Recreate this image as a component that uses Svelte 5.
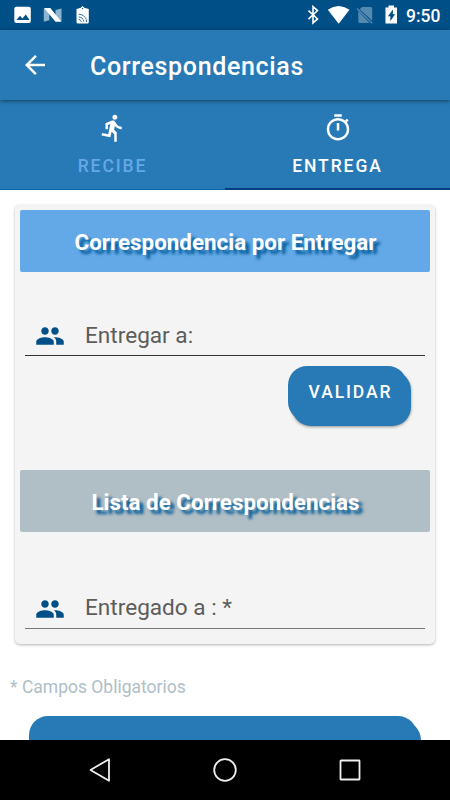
<script>
	const title = 'Correspondencias';

	const icons = {
		back: 'M20 11H7.83l5.59-5.59L12 4l-8 8 8 8 1.41-1.41L7.83 13H20v-2z',
		run: 'M13.49 5.48c1.1 0 2-.9 2-2s-.9-2-2-2-2 .9-2 2 .9 2 2 2zm-3.6 13.9l1-4.4 2.1 2v6h2v-7.5l-2.1-2 .6-3c1.3 1.5 3.3 2.5 5.5 2.5v-2c-1.9 0-3.5-1-4.3-2.4l-1-1.6c-.4-.6-1-1-1.7-1-.3 0-.5.1-.8.1l-5.2 2.2v4.7h2v-3.4l1.8-.7-1.6 8.1-4.9-1-.4 2 7 1.4z',
		timer: 'M15 1H9v2h6V1zm-4 13h2V8h-2v6zm8.03-6.61l1.42-1.42c-.43-.51-.9-.99-1.41-1.41l-1.42 1.42C16.07 4.74 14.12 4 12 4c-4.97 0-9 4.03-9 9s4.02 9 9 9 9-4.03 9-9c0-2.12-.74-4.07-1.97-5.61zM12 20c-3.87 0-7-3.13-7-7s3.13-7 7-7 7 3.13 7 7-3.13 7-7 7z',
		people: 'M16 11c1.66 0 2.99-1.34 2.99-3S17.66 5 16 5c-1.66 0-3 1.34-3 3s1.34 3 3 3zm-8 0c1.66 0 2.99-1.34 2.99-3S9.66 5 8 5C6.34 5 5 6.34 5 8s1.34 3 3 3zm0 2c-2.33 0-7 1.17-7 3.5V19h14v-2.5c0-2.33-4.67-3.5-7-3.5zm8 0c-.29 0-.62.02-.97.05 1.16.84 1.97 1.97 1.97 3.45V19h6v-2.5c0-2.33-4.67-3.5-7-3.5z'
	};

	const tabs = [
		{ id: 'recibe', label: 'RECIBE', icon: icons.run },
		{ id: 'entrega', label: 'ENTREGA', icon: icons.timer }
	];

	let active = $state('entrega');
</script>

{#snippet icon(path)}
	<svg class="icon" viewBox="0 0 24 24"><path d={path} /></svg>
{/snippet}

<div class="screen">
	<div class="status">
		<svg class="notifications" viewBox="0 0 80 20">
			<rect x="0.3" y="1.8" width="16.5" height="16.2" rx="2" fill="#fff" />
			<path d="M2.5 15l3.5-4.2 2.4 2.8 3.4-4.2 3.8 5.6z" fill="#004f87" />
			<path d="M29.8 3.6l5.5 3v8.6l-5.5 1.6zM41.5 5l6-1.6v13.2l-6-3.4z" fill="#8db4d0" />
			<path d="M30 3h6.3l11.2 13.7h-6z" fill="#fff" />
			<path d="M62.5 4l4.3-1.2L68.5 1l1.8 1.8L74.8 4v13q0 1.5-1.5 1.5H64q-1.5 0-1.5-1.5z" fill="#fff" />
			<circle cx="68.5" cy="3.6" r="0.7" fill="#004f87" />
			<path d="M64.8 9.3a7.5 7.5 0 0 1 7.7 7.5M64.8 12a5 5 0 0 1 5 5M64.8 14.5a2.4 2.4 0 0 1 2.4 2.4" fill="none" stroke="#004f87" stroke-width="1" stroke-dasharray="2 .5" />
		</svg>
		<svg class="system" viewBox="0 0 92 20">
			<path d="M2.5 5.7l9 8.2-4.5 4V1.6l4.5 4-9 8.6" fill="none" stroke="#fff" stroke-width="1.6" />
			<path d="M21.8 4.7Q32.5-2.7 43.5 4.7L32.7 18.7z" fill="#fff" />
			<path d="M56 2h8.7q1.5 0 1.5 1.5v12.3L53.7 4.3zM52.3 6v10.5q0 1.5 1.5 1.5H63.5z" fill="#5489b0" />
			<path d="M51 3.5l15.2 14.7" stroke="#5489b0" stroke-width="1.4" />
			<path d="M79.5 2.5h3V.5h5.5v2h3V18.500h-11.500z" fill="#fff" />
			<path d="M86.9 4.5v4.8h2.2l-4.8 7v-5h-2.4z" fill="#004f87" />
		</svg>
		<span class="clock">9:50</span>
	</div>

	<header>
		<button class="back" aria-label="Volver">{@render icon(icons.back)}</button>
		<h1>{title}</h1>
	</header>

	<nav class="tabs">
		{#each tabs as tab}
			<button class="tab" class:active={active === tab.id} onclick={() => (active = tab.id)}>
				{@render icon(tab.icon)}
				<span>{tab.label}</span>
			</button>
		{/each}
	</nav>

	<main>
		<section class="card">
			<h2 class="banner">Correspondencia por Entregar</h2>
			<div class="field">
				{@render icon(icons.people)}
				<span>Entregar a:</span>
			</div>
			<div class="actions">
				<button class="validate">VALIDAR</button>
			</div>
			<h2 class="banner gray">Lista de Correspondencias</h2>
			<div class="field last">
				{@render icon(icons.people)}
				<span>Entregado a : *</span>
			</div>
		</section>
		<p class="note">* Campos Obligatorios</p>
		<div class="submit"></div>
	</main>

	<div class="navbar">
		<svg viewBox="0 0 24 24"><path d="M21 1.2v21.6L2.5 12z" /></svg>
		<svg viewBox="0 0 24 24"><circle cx="12" cy="12" r="10.8" /></svg>
		<svg viewBox="0 0 24 24"><rect x="2.5" y="2.5" width="19" height="19" rx="0.5" /></svg>
	</div>
</div>

<style>
	:global(body) {
		margin: 0;
	}

	.screen {
		width: 450px;
		height: 800px;
		display: flex;
		flex-direction: column;
		overflow: hidden;
		background: #fff;
		font-family: Roboto, sans-serif;
	}

	button {
		border: none;
		padding: 0;
		background: none;
		font-family: inherit;
		color: #fff;
	}

	h1,
	h2,
	p {
		margin: 0;
	}

	.icon {
		display: block;
		width: 30px;
		height: 30px;
		flex: none;
		fill: currentColor;
	}

	.status {
		height: 30px;
		flex: none;
		display: flex;
		align-items: center;
		padding: 0 10px 0 14px;
		box-sizing: border-box;
		background: #004f87;
		color: #fff;
	}

	.notifications {
		width: 80px;
		height: 20px;
	}

	.system {
		width: 92px;
		height: 20px;
		margin-left: auto;
	}

	.clock {
		width: 34px;
		margin-left: 8px;
		font-size: 17.5px;
		font-weight: 500;
		line-height: 30px;
		padding-top: 2px;
	}

	header {
		position: relative;
		height: 70px;
		flex: none;
		display: flex;
		align-items: center;
		gap: 40px;
		padding: 0 20px;
		box-sizing: border-box;
		background: #277ab5;
		color: #fff;
		box-shadow: 0 1px 4px rgba(0, 0, 0, 0.5);
	}

	h1 {
		font-size: 25px;
		font-weight: 500;
		line-height: 30px;
		letter-spacing: 0.65px;
		padding-top: 3px;
	}

	.tabs {
		height: 90px;
		flex: none;
		display: flex;
		background: #277ab5;
	}

	.tab {
		flex: 1;
		display: flex;
		flex-direction: column;
		align-items: center;
		padding-top: 13px;
		box-sizing: border-box;
		border-bottom: 1px solid #0865ad;
		font-size: 17.5px;
		font-weight: 500;
		letter-spacing: 1.9px;
	}

	.tab span {
		margin-top: 12px;
		line-height: 22px;
		color: #64a8e8;
	}

	.tab.active {
		border-bottom: 2px solid #003c7d;
	}

	.tab.active span {
		color: #fff;
	}

	main {
		flex: 1;
		min-height: 0;
		overflow: hidden;
		padding: 15px 15px 0;
	}

	.card {
		height: 439px;
		padding: 5px;
		box-sizing: border-box;
		border-radius: 5px;
		background: #f4f4f4;
		box-shadow: 0 1px 3px rgba(0, 0, 0, 0.3);
	}

	.banner {
		height: 62px;
		border-radius: 2px;
		background: #63a8e7;
		color: #fff;
		font-size: 22.4px;
		font-weight: 700;
		line-height: 65px;
		text-align: center;
		text-indent: 1px;
		text-shadow: 4px 4px 3px #015a97;
	}

	.banner.gray {
		background: #b0bec5;
	}

	.field {
		height: 35px;
		display: flex;
		align-items: flex-start;
		gap: 20px;
		margin: 48px 5px 0;
		padding-left: 10px;
		border-bottom: 1px solid #333;
		color: #004f87;
	}

	.field .icon {
		margin-top: 1px;
	}

	.field span {
		color: #5c5c5c;
		font-size: 22.6px;
		line-height: 30px;
		padding-top: 1px;
	}

	.field.last {
		margin-top: 61px;
		border-bottom-color: #777;
	}

	.field.last span {
		padding-top: 0;
	}

	.actions {
		display: flex;
		justify-content: flex-end;
		height: 114px;
		padding: 10px 23px 0 0;
		box-sizing: border-box;
	}

	.validate {
		width: 119px;
		height: 55px;
		border-radius: 19px;
		background: #277ab5;
		box-shadow: 4px 5px 0 #277ab5, 4px 6px 3px rgba(0, 0, 0, 0.4);
		font-size: 17.5px;
		font-weight: 500;
		letter-spacing: 1.9px;
		padding: 0 0 4px 6px;
	}

	.note {
		margin: 32px 0 0 -5px;
		font-size: 17.5px;
		line-height: 22px;
		color: #b0bec5;
	}

	.submit {
		height: 55px;
		margin: 18px 18px 0 14px;
		border-radius: 19px;
		background: #277ab5;
		box-shadow: 4px 5px 0 #277ab5;
	}

	.navbar {
		height: 60px;
		flex: none;
		display: flex;
		justify-content: space-between;
		align-items: center;
		padding: 0 88px;
		box-sizing: border-box;
		background: #000;
	}

	.navbar svg {
		width: 24px;
		height: 24px;
		fill: none;
		stroke: #eee;
		stroke-width: 1.8;
		stroke-linejoin: round;
	}
</style>
